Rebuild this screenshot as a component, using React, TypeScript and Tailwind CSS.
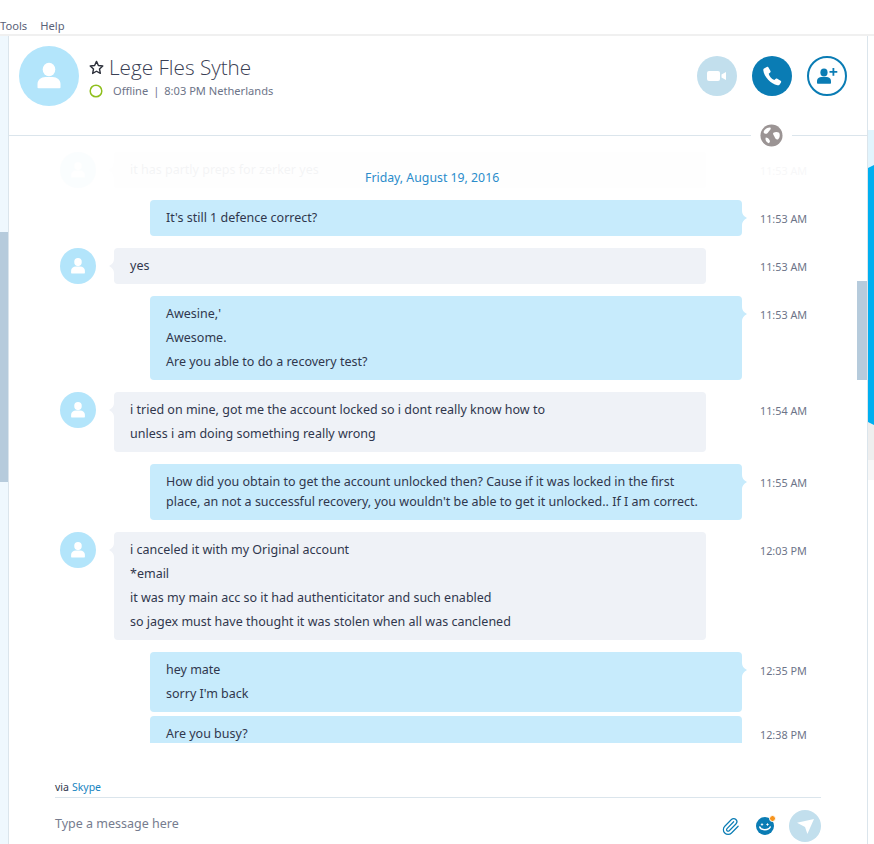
import { Paperclip } from "lucide-react";

const font = { fontFamily: '"Noto Sans", sans-serif' };

function UserGlyph({ className = "" }: { className?: string }) {
  return (
    <svg viewBox="0 0 60 60" className={className} fill="#fff">
      <ellipse cx="30" cy="23.5" rx="6.3" ry="6.8" />
      <path d="M18.5 41.5v-3.5c0-4 3.5-7 8-7h7c4.500 0 8 3 8 7v3.500c0 .5-.4.8-1 .8H19.500c-.6 0-1-.3-1-.8z" />
    </svg>
  );
}

function Avatar() {
  return (
    <div className="w-[36px] h-[36px] rounded-full bg-[#b3e5fb] shrink-0">
      <UserGlyph className="w-[36px] h-[36px]" />
    </div>
  );
}

function Tail({ side, color }: { side: "left" | "right"; color: string }) {
  return (
    <svg
      viewBox="0 0 5 14"
      className={
        side === "right"
          ? "absolute left-full top-[11px] w-[5px] h-[14px]"
          : "absolute right-full top-[11px] w-[5px] h-[14px] -scale-x-100"
      }
      fill={color}
    >
      <path d="M0 0C0 3 1.500 5 5 7 1.500 9 0 11 0 14z" />
    </svg>
  );
}

function Time({ t, className }: { t: string; className: string }) {
  return <div className={`text-[10.8px] leading-[24px] mt-[7px] text-[#6d7488] whitespace-nowrap ${className}`}>{t}</div>;
}

function Lines({ paragraphs }: { paragraphs: string[][] }) {
  return (
    <div className="flex flex-col gap-[4px]">
      {paragraphs.map((p) => (
        <div key={p[0]} className="leading-[20px]">
          {p.map((l) => (
            <div key={l}>{l}</div>
          ))}
        </div>
      ))}
    </div>
  );
}

function Incoming({ lines, time }: { lines: string[]; time: string }) {
  return (
    <div className="flex items-start">
      <Avatar />
      <div className="relative ml-[18px] w-[592px] rounded-[4px] bg-[#eff2f7] px-[16px] py-[8px]">
        <Tail side="left" color="#eff2f7" />
        <Lines paragraphs={lines.map((l) => [l])} />
      </div>
      <Time t={time} className="ml-[54px]" />
    </div>
  );
}

function Outgoing({ paragraphs, time, tail = true, tall = false }: { paragraphs: string[][]; time: string; tail?: boolean; tall?: boolean }) {
  return (
    <div className="flex items-start ml-[90px]">
      <div className={`relative w-[592px] rounded-[4px] bg-[#c7ebfc] px-[16px] pt-[8px] ${tall ? "pb-[40px]" : "pb-[8px]"}`}>
        {tail && <Tail side="right" color="#c7ebfc" />}
        <Lines paragraphs={paragraphs} />
      </div>
      <Time t={time} className="ml-[18px]" />
    </div>
  );
}

export default function App() {
  return (
    <div style={font} className="w-[874px] h-[844px] overflow-hidden bg-white flex flex-col text-[#30374d] text-[12.5px]">
      <div className="h-[36px] shrink-0 border-b-2 border-[#f0f0f0] flex items-end gap-[13px] text-[11.2px] text-[#5a6278] leading-[16px]">
        <span>Tools</span>
        <span>Help</span>
      </div>

      <div className="flex-1 flex min-h-0">
        <div className="w-[9px] shrink-0 border-r border-[#dbe5ec] bg-[#eff8fe] flex flex-col">
          <div className="h-[196px]" />
          <div className="h-[250px] bg-[#b6cbdc]" />
        </div>

        <div className="relative w-[858px] flex flex-col">
          <div className="h-[99px] shrink-0 flex justify-between pl-[10px] pr-[20px] pt-[10px]">
            <div className="flex">
              <div className="w-[60px] h-[60px] rounded-full bg-[#b3e5fb]">
                <UserGlyph className="w-[60px] h-[60px]" />
              </div>
              <div className="ml-[10px] pt-[6px]">
                <div className="flex items-center h-[30px]">
                  <svg viewBox="0 0 16 16" className="w-[15px] h-[15px]" fill="none" stroke="#2b2f3a" strokeWidth="1.500" strokeLinejoin="round">
                    <path d="M8 1.500l2 4.300 4.700.6-3.500 3.200.9 4.700L8 12l-4.100 2.300.9-4.700L1.300 6.400 6 5.800z" />
                  </svg>
                  <span className="ml-[5px] text-[20.7px] leading-[30px] font-light text-[#3a4054] whitespace-nowrap" style={{ fontFamily: '"Open Sans", sans-serif' }}>Lege Fles Sythe</span>
                </div>
                <div className="flex items-center h-[18px] text-[11.1px] text-[#6d7488] whitespace-nowrap">
                  <svg viewBox="0 0 14 14" className="w-[14px] h-[14px]" fill="none" stroke="#8fbf1d" strokeWidth="1.500">
                    <circle cx="7" cy="7" r="5.800" />
                  </svg>
                  <span className="ml-[10px]">Offline</span>
                  <span className="mx-[5px]">|</span>
                  <span>8:03 PM Netherlands</span>
                </div>
              </div>
            </div>
            <div className="flex gap-[15px] pt-[10px]">
              <div className="w-[40px] h-[40px] rounded-full bg-[#c2dfed] flex items-center justify-center">
                <svg viewBox="0 0 20 12" className="w-[20px] h-[12px]" fill="#fff">
                  <rect x="0" y="1" width="13" height="10" rx="2" />
                  <path d="M14.500 4.500L19 2v8l-4.500-2.500z" />
                </svg>
              </div>
              <div className="w-[40px] h-[40px] rounded-full bg-[#0a7cb4] flex items-center justify-center">
                <svg viewBox="0 0 40 40" className="w-[40px] h-[40px]" fill="#fff">
                  <path d="M12.500 12.200l2.300-1.300c.7-.4 1.300-.2 1.700.5l2 3.500c.3.6.2 1.100-.3 1.500l-1.500 1.300c.8 2.700 2.700 5 5.600 6.400l1.500-1.300c.5-.4 1-.4 1.500-.1l3.300 2c.6.400.8 1 .4 1.700l-1.300 2c-.5.700-1.300 1-2.300.9C19 27.800 12 21 11.300 14.200c-.1-.9.400-1.600 1.200-2z" />
                </svg>
              </div>
              <div className="w-[40px] h-[40px] rounded-full border-2 border-[#0a7cb4] flex items-center justify-center">
                <svg viewBox="0 0 24 18" className="w-[24px] h-[18px]" fill="#0a7cb4">
                  <ellipse cx="9" cy="5.500" rx="3.600" ry="3.900" />
                  <path d="M2 16v-1.800C2 11.300 4.300 10 7 10h4c2.700 0 5 1.300 5 4.200V16c0 .5-.3.7-.8.7H2.800c-.5 0-.8-.2-.8-.7z" />
                  <path d="M17.500 1h1.800v3h3v1.800h-3v3h-1.800v-3h-3V4h3z" />
                </svg>
              </div>
            </div>
          </div>

          <div className="flex items-center h-[1px] shrink-0">
            <div className="flex-1 border-t border-[#dbe5ec]" />
            <div className="mx-[9px] w-[23px] h-[23px] relative z-10">
              <svg viewBox="0 0 24 24" className="w-[23px] h-[23px]">
                <circle cx="12" cy="12" r="11.500" fill="#9b9494" />
                <path d="M5 6c2-2 5-3 6-2 1 1-1 3-2 4S7 11 5 10 4 7 5 6zM14 9c2-1 4-1 6 0 1 2 1 5-1 7-2 1-3-1-4-3s-2-3-1-4zM6 14c2 0 3 1 4 3 1 1 0 3-1 3-2-1-4-3-3-6z" fill="#fff" />
              </svg>
            </div>
            <div className="w-[75px] border-t border-[#dbe5ec]" />
          </div>

          <div className="h-[607px] shrink-0 overflow-hidden pl-[51px] pt-[16px] flex flex-col">
            <div className="opacity-[0.05] mb-[12px]">
              <Incoming lines={["it has partly preps for zerker yes"]} time="11:53 AM" />
            </div>
            <div className="flex flex-col gap-[12px]">
              <Outgoing paragraphs={[["It's still 1 defence correct?"]]} time="11:53 AM" />
              <Incoming lines={["yes"]} time="11:53 AM" />
              <Outgoing paragraphs={[["Awesine,'"], ["Awesome."], ["Are you able to do a recovery test?"]]} time="11:53 AM" />
              <Incoming lines={["i tried on mine, got me the account locked so i dont really know how to", "unless i am doing something really wrong"]} time="11:54 AM" />
              <Outgoing
                paragraphs={[["How did you obtain to get the account unlocked then? Cause if it was locked in the first", "place, an not a successful recovery, you wouldn't be able to get it unlocked.. If I am correct."]]}
                time="11:55 AM"
              />
              <Incoming lines={["i canceled it with my Original account", "*email", "it was my main acc so it had authenticitator and such enabled", "so jagex must have thought it was stolen when all was canclened"]} time="12:03 PM" />
              <div className="flex flex-col gap-[4px]">
                <Outgoing paragraphs={[["hey mate"], ["sorry I'm back"]]} time="12:35 PM" />
                <Outgoing paragraphs={[["Are you busy?"]]} time="12:38 PM" tail={false} tall />
              </div>
            </div>
          </div>

          <div className="absolute left-[356px] top-[132px] text-[12.3px] leading-[20px] text-[#2b8ccb] whitespace-nowrap">Friday, August 19, 2016</div>

          <div className="absolute right-0 top-[245px] w-[10px] h-[99px] bg-[#b6cbdc]" />

          <div className="flex-1 pl-[46px] pr-[46px] flex flex-col min-h-0">
            <div className="h-[55px] shrink-0 border-b border-[#dbe5ec] flex items-end pb-[2px] text-[10.5px] leading-[16px] text-[#30374d]">
              <span>via</span>
              <span className="ml-[3px] text-[#1784c1]">Skype</span>
            </div>
            <div className="flex items-center h-[32px] mt-[12px]">
              <span className="text-[12.5px] text-[#767c8e] flex-1 -mt-[3px]">Type a message here</span>
              <Paperclip className="w-[19px] h-[19px] text-[#0a7cb4]" strokeWidth={1.5} />
              <div className="relative ml-[16px] w-[18px] h-[18px] rounded-full bg-[#0a7cb4]">
                <svg viewBox="0 0 18 18" className="w-[18px] h-[18px]" fill="none" stroke="#fff">
                  <circle cx="6" cy="7.500" r="0.700" fill="#fff" />
                  <circle cx="11.500" cy="7.500" r="0.700" fill="#fff" />
                  <path d="M3.800 10c1 3.500 9 3.500 10.400 0" strokeWidth="1.500" strokeLinecap="round" />
                </svg>
                <span className="absolute -right-[2px] -top-[2px] w-[7px] h-[7px] rounded-full bg-[#f7941d] border border-white" />
              </div>
              <div className="ml-[15px] w-[32px] h-[32px] rounded-full bg-[#c2dfed] flex items-center justify-center">
                <svg viewBox="0 0 20 18" className="w-[19px] h-[17px]" fill="#fff">
                  <path d="M1 5l18-4-7 16-2.500-7.500z" />
                </svg>
              </div>
            </div>
          </div>
        </div>

        <div className="w-[7px] shrink-0 border-l border-[#dbe5ec] flex flex-col">
          <div className="h-[94px]" />
          <div className="h-[38px] bg-[#e1f4fd]" />
          <div className="h-[260px] -mt-[3px] bg-[#00aff0] [clip-path:polygon(0_3px,100%_0,100%_100%,0_calc(100%-3px))]" />
          <div className="h-[38px] bg-[#eeeeee] -mt-[3px]" />
          <div className="h-[20px] bg-[#f7f7f7]" />
        </div>
      </div>
    </div>
  );
}
